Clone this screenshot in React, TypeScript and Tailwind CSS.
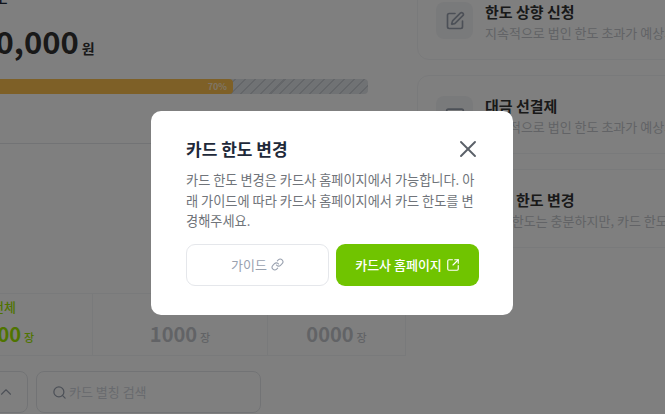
// 카드 한도 변경 모달 화면. 배경 페이지는 화면 밖으로 잘린 상태 그대로 흐름 레이아웃으로 둔다.
import { Search, ChevronUp, SquarePen, Link, SquareArrowOutUpRight, X, CreditCard, RefreshCw } from "lucide-react";

const FONT = "font-['Noto_Sans_CJK_KR','Noto_Sans',sans-serif]";

const cards = [
  { title: "한도 상향 신청", desc: "지속적으로 법인 한도 초과가 예상되는 경우", Icon: SquarePen },
  { title: "대금 선결제", desc: "일시적으로 법인 한도 초과가 예상되는 경우", Icon: CreditCard },
  { title: "카드 한도 변경", desc: "법인 한도는 충분하지만, 카드 한도가 부족한 경우", Icon: RefreshCw },
];

function ActionCard({ title, desc, Icon }: (typeof cards)[number]) {
  return (
    <div className="flex h-[79px] w-[320px] shrink-0 items-center gap-3 rounded-xl border border-gray-100 bg-white pl-[18px]">
      <div className="flex h-[37px] w-[37px] shrink-0 items-center justify-center rounded-lg bg-gray-100">
        <Icon size={20} className="text-gray-400" />
      </div>
      <div className="min-w-0 pt-[2px] whitespace-nowrap">
        <p className="text-[15px] leading-[22px] font-bold text-[#333]">{title}</p>
        <p className="text-[13px] leading-[20px] text-[#c4c7cc]">{desc}</p>
      </div>
    </div>
  );
}

function Stat({ label, value, width, active }: { label: string; value: string; width: string; active?: boolean }) {
  const color = active ? "text-[#9fe800]" : "text-[#c4c7cc]";
  return (
    <div className={`flex shrink-0 flex-col items-center justify-center border-r border-gray-100 ${width} ${color}`}>
      <p className="text-[13px] leading-[18px] font-medium">{label}</p>
      <p className="mt-[4px] flex items-baseline gap-[3px] leading-[28px]">
        <span className="text-[20px] font-bold">{value}</span>
        <span className="text-[11px] font-medium">장</span>
      </p>
    </div>
  );
}

export default function App() {
  return (
    <div className={`relative h-[414px] w-[665px] overflow-hidden bg-white ${FONT}`}>
      <div className="-mt-[19px] flex">
        <div className="-ml-[100px] w-[506px] shrink-0">
          <p className="mt-[7px] ml-[49px] text-[15px] leading-[20px] font-medium text-gray-800">법인 한도</p>
          <p className="mt-[11px] flex items-baseline leading-[44px] text-[#333]">
            <span className="ml-[-6px] text-[31px] font-bold">100,000,000</span>
            <span className="ml-[3px] text-[14px] font-bold">원</span>
          </p>
          <div className="mt-[9px] flex h-[15px] w-[468px] overflow-hidden rounded bg-[repeating-linear-gradient(135deg,#e1e4e8_0,#e1e4e8_5.5px,#c8ccd2_5.5px,#c8ccd2_7px)]">
            <div className="flex w-[333px] items-center justify-end rounded bg-[#fcc04e] pr-[6px] text-[9px] font-bold text-white/70">
              70%
            </div>
          </div>
          <div className="mt-[49px] h-[150px] border-t border-gray-200" />
          <div className="flex h-[63px] border-y border-gray-100 pl-[16px]">
            <Stat label="전체" value="2000" width="w-[177px]" active />
            <Stat label="사용 카드" value="1000" width="w-[175px]" />
            <Stat label="미사용 카드" value="0000" width="w-[138px]" />
          </div>
          <div className="mt-[15px] flex gap-2 pl-[60px]">
            <button className="flex h-[42px] w-[68px] items-center justify-end rounded-lg border border-gray-200 pr-[12px] text-gray-400">
              <ChevronUp size={18} strokeWidth={1.5} />
            </button>
            <div className="flex h-[42px] w-[225px] items-center gap-[2px] rounded-lg border border-gray-200 pl-[15px] text-[13px] text-gray-300">
              <Search size={15} className="text-gray-400" />
              카드 별칭 검색
            </div>
          </div>
        </div>
        <div className="ml-[11px] flex flex-col gap-[15px]">
          {cards.map((c) => (
            <ActionCard key={c.title} {...c} />
          ))}
        </div>
      </div>

      {/* 딤 + 모달 */}
      <div className="absolute inset-0 flex bg-[rgba(0,0,0,0.5)] pt-[111px] pl-[151px]">
        <div className="h-[204px] w-[362px] rounded-[10px] bg-white pt-[25px] pr-[34px] pl-[35px]">
          <div className="flex h-[26px] items-center justify-between">
            <h2 className="text-[17px] font-bold text-gray-800">카드 한도 변경</h2>
            <X size={28} strokeWidth={1.6} className="-my-1 -mr-[3px] text-[#5a6068]" />
          </div>
          <p className="mt-[8px] text-[13.2px] leading-[20.5px] break-all text-[#70747a]">
            카드 한도 변경은 카드사 홈페이지에서 가능합니다. 아래 가이드에 따라 카드사 홈페이지에서 카드 한도를 변경해주세요.
          </p>
          <div className="mt-[12px] flex gap-[7px]">
            <button className="flex h-[42px] w-[143px] items-center justify-center gap-1 rounded-[9px] border border-gray-200 text-[13px] text-gray-400">
              가이드
              <Link size={13} />
            </button>
            <button className="flex h-[42px] w-[143px] items-center justify-center gap-1 rounded-[9px] bg-[#70c400] text-[13px] font-medium text-white">
              카드사 홈페이지
              <SquareArrowOutUpRight size={14} />
            </button>
          </div>
        </div>
      </div>
    </div>
  );
}
